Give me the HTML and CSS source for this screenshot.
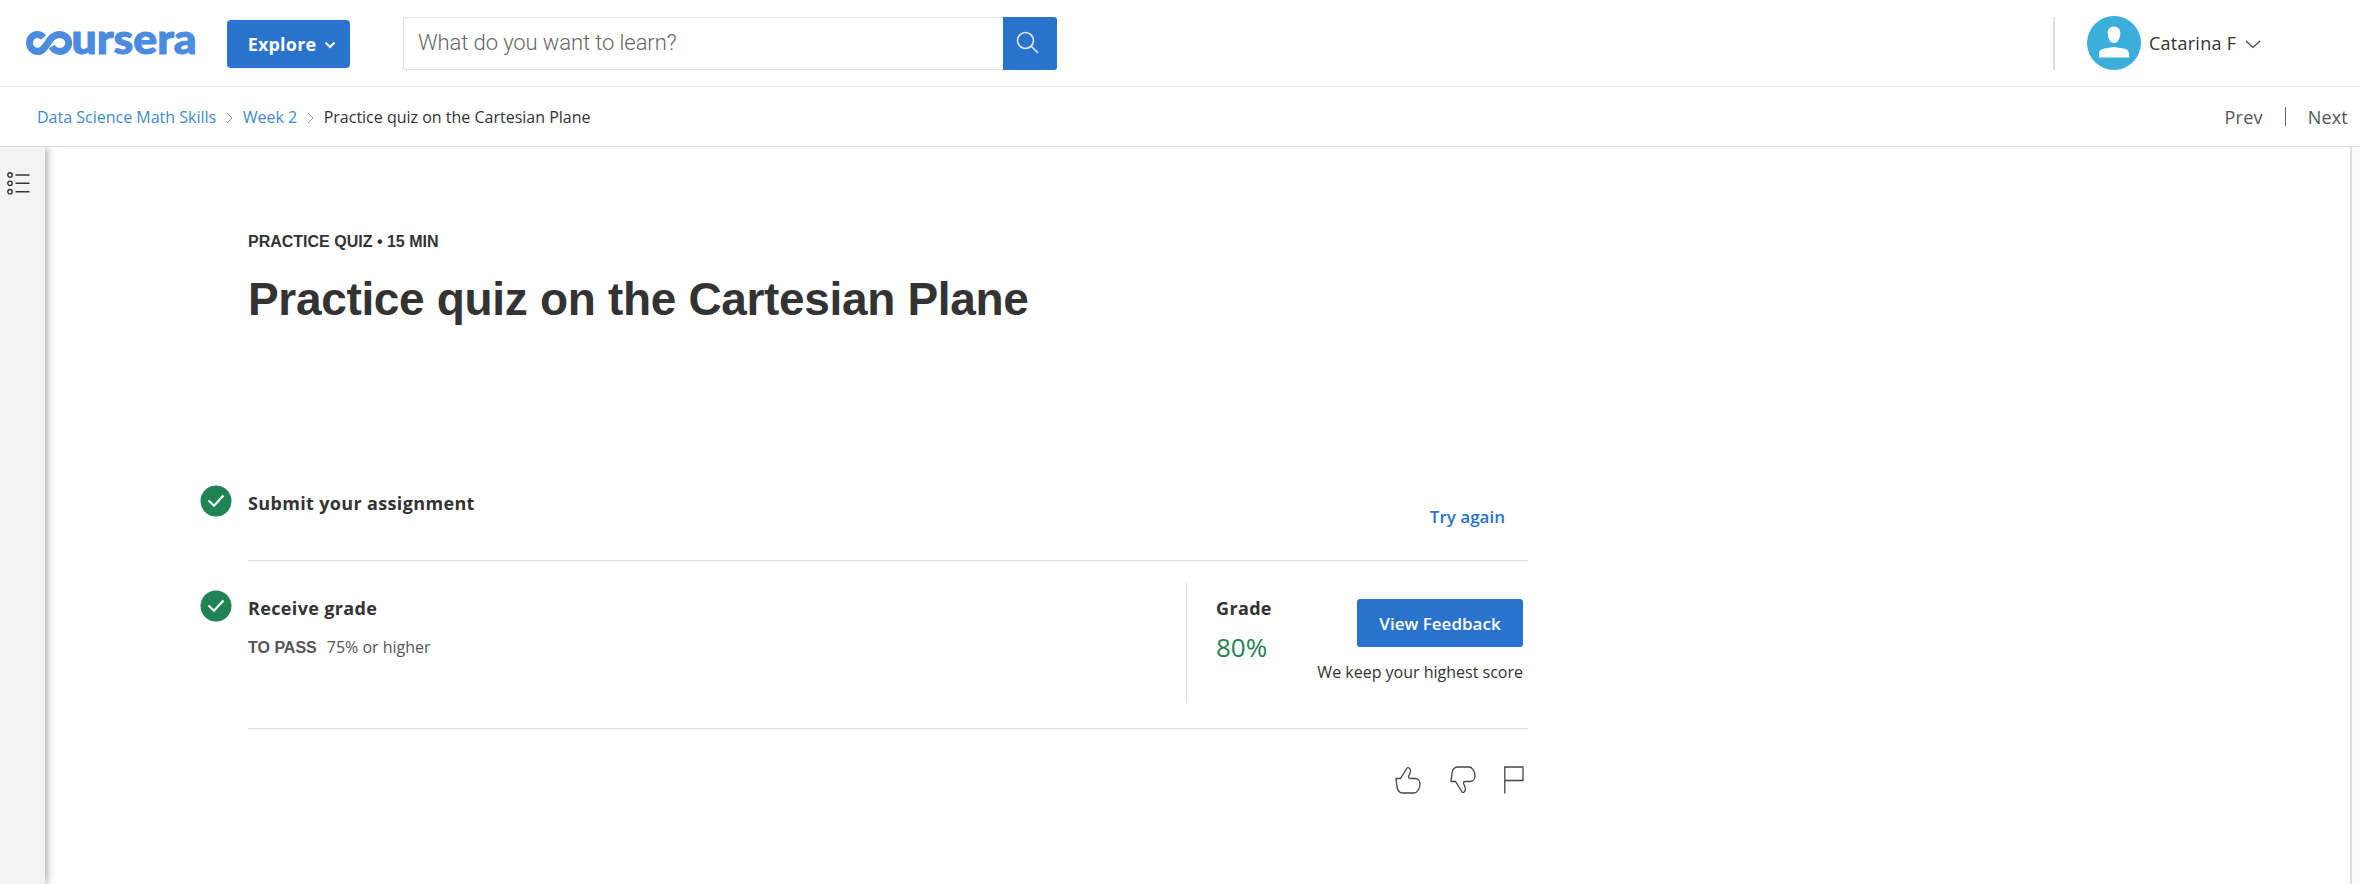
FILE: index.html
```html
<!DOCTYPE html>
<html lang="en">
<head>
<meta charset="utf-8">
<title>Practice quiz on the Cartesian Plane</title>
<link rel="stylesheet" href="styles.css">
</head>
<body>
<header class="topbar">
  <svg class="logo" width="172" height="56" viewBox="0 0 172 56" role="img" aria-label="coursera">
    <path class="logo-loop" d="M18.500 22.500C16.500 20.300 14.300 19.500 12.300 19.500C8 19.500 4.500 23.200 4.500 27.800C4.500 32.800 8.300 36.500 13 36.500C22 36.500 23 19.500 34.500 19.500C39.500 19.500 43.700 23.200 43.700 28C43.700 32.800 39.700 36.500 35.300 36.500C31.500 36.500 28.500 34.500 26.800 31.500"/>
    <text class="logo-text" x="46.500" y="38.500" textLength="125" lengthAdjust="spacingAndGlyphs">ursera</text>
  </svg>
  <button class="explore">Explore
    <svg width="12" height="8" viewBox="0 0 12 8"><path d="M1.500 1.500L6 6L10.500 1.500"/></svg>
  </button>
  <div class="search">
    <div class="search-field"><span class="placeholder">What do you want to learn?</span></div>
    <button class="search-button" aria-label="Search">
      <svg width="24" height="24" viewBox="0 0 24 24"><circle cx="9.500" cy="9.500" r="8"/><path d="M15.200 15.200L22 22"/></svg>
    </button>
  </div>
  <div class="account">
    <svg class="avatar" width="54" height="54" viewBox="0 0 54 54"><circle cx="27" cy="27" r="27" fill="#3caedb"/><path fill="#fff" d="M27 10.500C31.300 10.500 33.300 13.500 33.300 17C33.300 22 31 27 27 27C23 27 20.700 22 20.700 17C20.700 13.500 22.700 10.500 27 10.500ZM12 41.500C12 37 12 34.700 14.500 33.500C18 32 23 32 27 31C31 32 36 32 39.500 33.500C42 34.700 42 37 42.300 41.500Z"/></svg>
    <span class="user">Catarina F</span>
    <svg class="caret" width="16" height="9" viewBox="0 0 16 9"><path d="M1 1L8 7.500L15 1"/></svg>
  </div>
</header>
<nav class="crumbs">
  <a>Data Science Math Skills</a>
  <svg width="7" height="12" viewBox="0 0 7 12"><path d="M1 1L6 6L1 11"/></svg>
  <a>Week 2</a>
  <svg width="7" height="12" viewBox="0 0 7 12"><path d="M1 1L6 6L1 11"/></svg>
  <span class="current">Practice quiz on the Cartesian Plane</span>
  <div class="pager"><span>Prev</span><i></i><span>Next</span></div>
</nav>
<div class="workspace">
  <aside class="rail">
    <svg width="24" height="24" viewBox="0 0 24 24"><g><circle cx="3" cy="4" r="2.200"/><circle cx="3" cy="12.300" r="2.200"/><circle cx="3" cy="20.700" r="2.200"/><path d="M8.500 4H22.500M8.500 12.300H22.500M8.500 20.700H22.500"/></g></svg>
  </aside>
  <main class="content">
    <div class="eyebrow">PRACTICE QUIZ • 15 MIN</div>
    <h1>Practice quiz on the Cartesian Plane</h1>
    <section class="step submit">
      <svg class="check" width="32" height="32" viewBox="0 0 32 32"><circle cx="16" cy="16" r="15.500"/><path d="M8.500 15.500L14 20.700L23.500 10.500"/></svg>
      <h2>Submit your assignment</h2>
      <a class="again">Try again</a>
    </section>
    <section class="step receive">
      <svg class="check" width="32" height="32" viewBox="0 0 32 32"><circle cx="16" cy="16" r="15.500"/><path d="M8.500 15.500L14 20.700L23.500 10.500"/></svg>
      <div class="requirement">
        <h2>Receive grade</h2>
        <p><b>TO PASS</b><span>75% or higher</span></p>
      </div>
      <div class="grade">
        <div><h2>Grade</h2><div class="score">80%</div></div>
        <div class="feedback"><button>View Feedback</button><p>We keep your highest score</p></div>
      </div>
    </section>
    <div class="reactions">
      <svg width="26" height="28" viewBox="0 0 26 28"><path d="M1 12.500H5.500L12 2C13 .7 15.500 2.500 15.500 5C15.500 7.500 13.500 9.500 13.500 11C13.500 12 14 12.500 15.500 12.500H20C23 12.500 25 15 25 18C25 22 22.500 27 19 27H7.500C4.500 27 2.700 24.500 2 21Z"/></svg>
      <svg width="26" height="28" viewBox="0 0 26 28"><path d="M1 15.500H5.500L12 26C13 27.300 15.500 25.500 15.500 23C15.500 20.500 13.500 18.500 13.500 17C13.500 16 14 15.500 15.500 15.500H20C23 15.500 25 13 25 10C25 6 22.500 1 19 1H7.500C4.500 1 2.700 3.500 2 7Z"/></svg>
      <svg class="flag" width="20" height="28" viewBox="0 0 20 28"><path d="M.8 27.500V1H19V14.500H.8"/></svg>
    </div>
  </main>
  <div class="gutter"></div>
</div>
</body>
</html>
```
FILE: styles.css
```css
* { box-sizing: border-box; }
body { margin: 0; height: 884px; overflow: hidden; display: flex; flex-direction: column; background: #fff; color: #333; font-family: "Open Sans", sans-serif; }
h1, h2, p { margin: 0; }
button { border: 0; padding: 0; background: #2a73cc; color: #fff; font-family: inherit; }
svg { flex: none; fill: none; }
.topbar { height: 87px; flex: none; display: flex; align-items: center; border-bottom: 1px solid #ddd; padding-left: 25px; }
.logo { margin-right: 30px; }
.logo-loop { stroke: #4b8be0; stroke-width: 7; }
.logo-text { font: 900 41px Lato, sans-serif; fill: #4b8be0; stroke: #4b8be0; stroke-width: 1; }
.explore { width: 123px; height: 48px; margin-top: 2px; border-radius: 4px; font-size: 18px; font-weight: 700; letter-spacing: .2px; display: flex; align-items: center; justify-content: center; gap: 8px; padding-left: 7px; }
.explore svg { stroke: #fff; stroke-width: 2.2; margin-top: 2px; }
.search { margin-left: 53px; display: flex; height: 53px; width: 654px; }
.search-field { flex: 1; border: 1px solid #ddd; border-right: 0; border-radius: 3px 0 0 3px; padding: 11px 0 0 14px; }
.placeholder { display: block; font: 300 22px/28px Roboto, sans-serif; letter-spacing: -.1px; color: #666; white-space: nowrap; }
.search-button { width: 54px; border-radius: 0 3px 3px 0; display: grid; place-items: center; padding-right: 4px; }
.search-button svg { stroke: #e5e8ec; stroke-width: 1.6; }
.account { margin-left: auto; width: 307px; height: 53px; border-left: 2px solid #ddd; display: flex; align-items: center; padding-left: 32px; }
.user { font-size: 18px; letter-spacing: .25px; margin-left: 8px; }
.caret { stroke: #444; stroke-width: 1.2; margin: 3px 0 0 9px; }
.crumbs { height: 60px; flex: none; display: flex; align-items: center; border-bottom: 1px solid #ddd; padding: 0 12px 0 37px; font-size: 16px; }
.crumbs a { color: #3f8bcb; }
.crumbs svg { stroke: #999; margin: 2px 10px 0 9.5px; }
.pager { margin-left: auto; display: flex; align-items: center; font-size: 18px; letter-spacing: .2px; color: #555; }
.pager i { width: 1px; height: 19px; background: #666; margin: 0 22px; }
.workspace { flex: 1; min-height: 0; display: flex; overflow: hidden; }
.rail { width: 45px; background: #f3f3f3; box-shadow: 2px 0 8px rgba(0,0,0,.35); padding: 24px 0 0 7px; }
.rail svg { stroke: #333; stroke-width: 1.4; }
.content { width: 1328px; margin-left: 155px; }
.eyebrow { margin: 85px 0 0 48px; font: 700 16px/20px "Liberation Sans", sans-serif; }
h1 { margin: 17px 0 0 48px; font: 700 46px/60px "Liberation Sans", sans-serif; letter-spacing: -.33px; white-space: nowrap; }
h2 { font-size: 18px; line-height: 26px; font-weight: 700; letter-spacing: .35px; }
.step { display: flex; position: relative; margin-left: 48px; border-bottom: 1px solid #ddd; }
.check { position: absolute; left: -48px; }
.check circle { fill: #1f8354; }
.check path { stroke: #fff; stroke-width: 2.2; }
.submit { height: 90px; margin-top: 142px; padding: 19px 23px 0 0; justify-content: space-between; }
.submit .check { top: 14px; }
.again { color: #2a73cc; font-weight: 600; font-size: 17px; line-height: 22px; margin-top: 16px; }
.receive { height: 168px; padding-top: 22px; justify-content: space-between; }
.receive .check { top: 29px; }
.requirement { padding-top: 12px; }
.requirement p { margin-top: 15px; font-size: 16px; line-height: 22px; color: #555; }
.requirement b { font-family: "Liberation Sans", sans-serif; margin-right: 10px; }
.grade { width: 342px; height: 120px; border-left: 1px solid #ddd; padding: 12px 5px 0 29px; display: flex; justify-content: space-between; }
.score { color: #1f8354; font-size: 26px; line-height: 36px; margin-top: 8px; }
.feedback { display: flex; flex-direction: column; align-items: flex-end; padding-top: 4px; }
.feedback button { width: 166px; height: 48px; border-radius: 3px; font-size: 17px; font-weight: 600; }
.feedback p { font-size: 16px; line-height: 22px; margin-top: 14px; white-space: nowrap; }
.reactions { margin: 37px 4px 0 0; display: flex; justify-content: flex-end; gap: 29px; }
.reactions svg { stroke: #444; stroke-width: 1.3; }
.reactions .flag { margin-left: -1px; }
.gutter { margin-left: auto; width: 10px; background: #f9f9f9; border-left: 2px solid #ddd; }
```
